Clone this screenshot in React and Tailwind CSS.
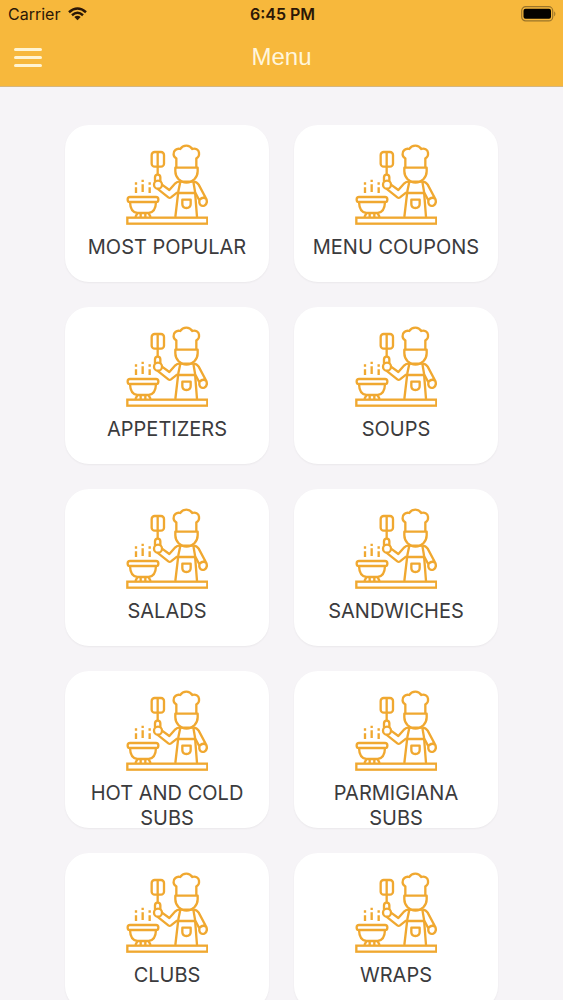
const categories = [
  { label: "MOST POPULAR", path: "#most-popular" },
  { label: "MENU COUPONS", path: "#menu-coupons" },
  { label: "APPETIZERS", path: "#appetizers" },
  { label: "SOUPS", path: "#soups" },
  { label: "SALADS", path: "#salads" },
  { label: "SANDWICHES", path: "#sandwiches" },
  { label: "HOT AND COLD SUBS", path: "#hot-and-cold-subs" },
  { label: "PARMIGIANA SUBS", path: "#parmigiana-subs" },
  { label: "CLUBS", path: "#clubs" },
  { label: "WRAPS", path: "#wraps" },
];

const ChefIcon = ({ className }) => (
  <svg
    viewBox="33 27 246 243"
    className={className}
    fill="none"
    stroke="currentColor"
    strokeWidth="7"
    strokeLinejoin="round"
    aria-hidden="true"
  >
    {/* hat and head */}
    <path d="M184 98V70C174 66 173 51 181 45C187 40 193 41 196 42C200 35 207 32 214 32C221 32 228 36 232 42C241 39 251 44 252 53C253 62 249 68 244 70V98" />
    <path d="M181 98H248V109A33.5 33.5 0 0 1 181 109Z" />
    {/* spatula */}
    <rect x="110" y="51" width="37" height="44" rx="9" />
    <path d="M128 52V119" />
    <path d="M120 140V127Q120 119 128 119Q136 119 136 127V140" />
    {/* raised arm */}
    <circle cx="129" cy="149" r="12" />
    <path d="M140 148L163 165L181 145Q186 140 195 140" />
    <path d="M127 161L160 187Q164 190 168 187L187 172" />
    {/* body and apron */}
    <path d="M195 140H235M196 140L190 169L181 246M235 140L240 169L246 246M188 174H241" />
    <path d="M202 194H227V207Q227 219 214 219Q202 219 202 207Z" />
    {/* lowered arm */}
    <path d="M235 140Q246 141 251 149L274 192Q279 206 268 212Q256 215 253 203V196L241 173M254 194Q263 184 273 191" />
    {/* steam */}
    <path
      d="M63 142V149M63 157V174M83 134V141M83 148V171M104 142V149M104 157V174"
      strokeWidth="7"
    />
    {/* bowl */}
    <rect x="38" y="186" width="92" height="15" rx="7" />
    <path d="M45 201Q46 232 67 234H101Q122 232 123 201M67 235L61 246M101 235L107 246M77 235V246M91 235V246" />
    {/* counter */}
    <rect x="37" y="248" width="240" height="18" strokeLinejoin="miter" />
  </svg>
);

const WifiIcon = () => (
  <svg viewBox="0 0 19 14" className="h-[14px] w-[19px]" aria-hidden="true">
    <path
      d="M1 5.2Q9.5 -2.3 18 5.2M4 8.2Q9.5 3.4 15 8.2"
      fill="none"
      stroke="currentColor"
      strokeWidth="2.5"
    />
    <path d="M6.3 10Q9.5 7.3 12.7 10L9.5 13.3Z" fill="currentColor" />
  </svg>
);

const BatteryIcon = () => (
  <svg viewBox="0 0 36 16" className="h-4 w-9" aria-hidden="true">
    <rect
      x="0.7"
      y="0.7"
      width="31"
      height="14.2"
      rx="4"
      fill="none"
      stroke="#9b7429"
      strokeWidth="1.2"
    />
    <rect x="2.5" y="2.8" width="27.5" height="10" rx="2" fill="#050300" />
    <path d="M33.2 5.2Q35.6 7.8 33.2 10.4Z" fill="#9b7429" />
  </svg>
);

const StatusBar = () => (
  <div className="grid h-7 grid-cols-3 items-center pl-2 pr-1.5 text-base text-[#2b1706]">
    <div className="flex items-center gap-2">
      <span>Carrier</span>
      <WifiIcon />
    </div>
    <span className="text-center font-semibold">6:45 PM</span>
    <div className="flex justify-end">
      <BatteryIcon />
    </div>
  </div>
);

const Header = () => (
  <header className="border-b border-[#d5b680] bg-[#f7b83c]">
    <StatusBar />
    <div className="grid h-[58px] grid-cols-[1fr_auto_1fr] items-center px-3">
      <button
        type="button"
        aria-label="Open navigation"
        className="flex w-8 flex-col items-center gap-[5px] py-2"
      >
        <span className="h-[3px] w-7 rounded-sm bg-[#fff4d2]" />
        <span className="h-[3px] w-7 rounded-sm bg-[#fff4d2]" />
        <span className="h-[3px] w-7 rounded-sm bg-[#fff4d2]" />
      </button>
      <h1 className="font-['Liberation_Sans',sans-serif] text-2xl text-[#fff6dc]">
        Menu
      </h1>
    </div>
  </header>
);

const CategoryCard = ({ label, path }) => (
  <a
    href={path}
    className="flex h-[157px] flex-col items-center rounded-3xl bg-white px-4 pt-[19px] text-center shadow-xs"
  >
    <ChefIcon className="h-[81px] w-[82px] shrink-0 text-[#f0a830]" />
    <span className="mt-[10px] text-xl leading-[25px] text-[#3b3b3d]">
      {label}
    </span>
  </a>
);

export default function App() {
  return (
    <div className="h-screen overflow-hidden bg-[#f6f4f7] font-[Inter,sans-serif]">
      <Header />
      <main className="grid grid-cols-2 gap-[25px] px-[65px] pt-[38px]">
        {categories.map(({ label, path }) => (
          <CategoryCard key={label} label={label} path={path} />
        ))}
      </main>
    </div>
  );
}
